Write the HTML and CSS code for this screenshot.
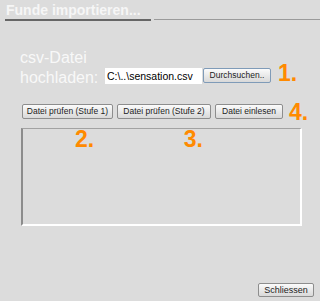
FILE: index.html
```html
<!DOCTYPE html>
<html lang="de">

<head>
    <meta charset="UTF-8">
    <meta name="viewport" content="width=device-width, initial-scale=1.0">
    <title>Funde importieren</title>
    <link rel="stylesheet" href="styles.css">
</head>

<body>
    <div class="dialog">
        <div class="titlebar">
            <span class="title">Funde importieren...</span>
            <span class="title-rest"></span>
        </div>

        <div class="upload-row">
            <div class="upload-label">csv-Datei<br>hochladen:</div>
            <div class="file-field">C:\..\sensation.csv</div>
            <button class="btn btn-browse">Durchsuchen..</button>
            <span class="step step-one">1.</span>
        </div>

        <div class="action-row">
            <button class="btn btn-check1">Datei prüfen (Stufe 1)</button>
            <button class="btn btn-check2">Datei prüfen (Stufe 2)</button>
            <button class="btn btn-read">Datei einlesen</button>
            <span class="step step-four">4.</span>
        </div>

        <div class="log-box">
            <span class="step step-two">2.</span>
            <span class="step step-three">3.</span>
        </div>

        <div class="footer">
            <button class="btn btn-close">Schliessen</button>
        </div>
    </div>
</body>

</html>
```

FILE: styles.css
```css
body {
    margin: 0;
    padding: 0;
    font-family: 'Liberation Sans', Arial, sans-serif;
    background-color: #dcdcdc;
}

.dialog {
    height: 301px;
    box-sizing: border-box;
    display: flex;
    flex-direction: column;
    background-color: #dcdcdc;
}

/* title */
.titlebar {
    display: flex;
    align-items: flex-end;
}

.title {
    margin-left: 5px;
    padding: 2px 10px 1px 1px;
    font-size: 14px;
    font-weight: bold;
    line-height: 16px;
    color: #f6f6f6;
    border-bottom: 2px solid #666;
}

.title-rest {
    flex: 1;
    margin-left: 3px;
    margin-bottom: 1px;
    border-bottom: 1px solid #9a9a9a;
}

/* upload */
.upload-row {
    display: flex;
    align-items: flex-end;
    margin-top: 27px;
    padding-left: 20px;
}

.upload-label {
    width: 85px;
    font-size: 16px;
    line-height: 20px;
    color: #f8f8f8;
}

.file-field {
    width: 97px;
    height: 16px;
    box-sizing: border-box;
    margin-bottom: 4px;
    padding-left: 2px;
    background-color: #fff;
    font-size: 10.5px;
    line-height: 16px;
    color: #000;
    white-space: nowrap;
}

/* buttons */
.btn {
    height: 15px;
    box-sizing: border-box;
    padding: 0;
    border: 1px solid #8d8d8d;
    border-radius: 2px;
    background: linear-gradient(#fbfbfb, #e6e6e6 60%, #d9d9d9);
    font-family: 'Liberation Sans', Arial, sans-serif;
    font-size: 8.5px;
    line-height: 13px;
    color: #1c1c1c;
    white-space: nowrap;
}

.btn-browse {
    width: 68px;
    margin-left: 1px;
    margin-bottom: 5px;
    border-color: #7f9bb8;
}

.step {
    font-size: 23px;
    font-weight: bold;
    line-height: 23px;
    color: #ff8a00;
}

.step-one {
    margin-left: 7px;
    margin-bottom: 3px;
}

.action-row {
    display: flex;
    align-items: flex-start;
    gap: 4px;
    margin-top: 16px;
    padding-left: 22px;
}

.btn-check1 {
    width: 91px;
}

.btn-check2 {
    width: 94px;
}

.btn-read {
    width: 68px;
}

.step-four {
    margin-left: 2px;
    margin-top: -3px;
}

/* log */
.log-box {
    width: 281px;
    height: 98px;
    box-sizing: border-box;
    margin-top: 4px;
    margin-left: 21px;
    padding-left: 52px;
    border-top: 1px solid #a2a2a2;
    border-left: 2px solid #8c8c8c;
    border-right: 2px solid #fff;
    border-bottom: 2px solid #fff;
}

.log-box .step {
    line-height: 20px;
}

.step-three {
    margin-left: 85px;
}

/* footer */
.footer {
    display: flex;
    justify-content: flex-end;
    margin-top: auto;
    padding: 0 6px 4px 0;
}

.btn-close {
    width: 56px;
    height: 14px;
    line-height: 12px;
    font-size: 9px;
}
```
